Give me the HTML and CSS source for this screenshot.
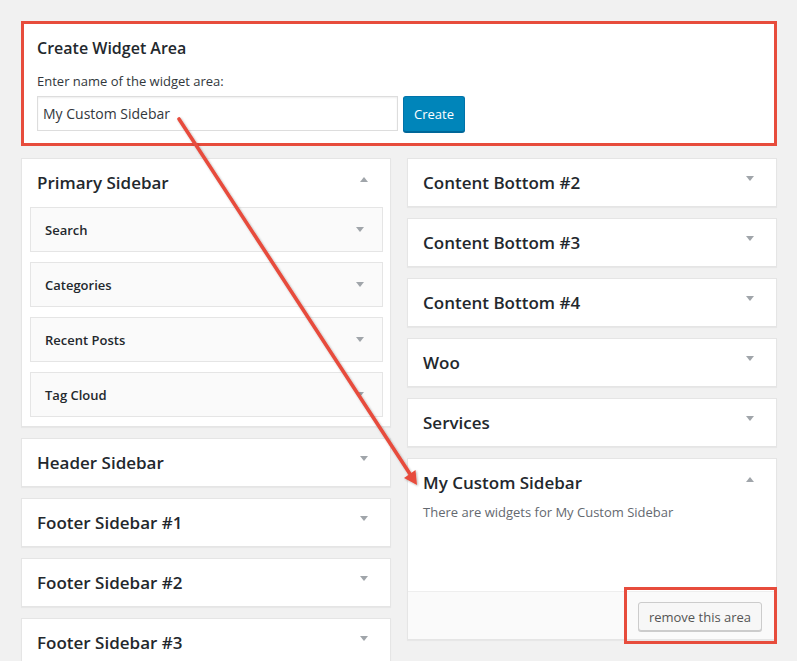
FILE: index.html
```html
<!DOCTYPE html>
<html lang="en">
<head>
<meta charset="utf-8">
<title>Widgets</title>
<link rel="stylesheet" href="styles.css">
</head>
<body>
<div class="page">
  <section class="create-box">
    <h2 class="create-title">Create Widget Area</h2>
    <label class="create-label" for="area-name">Enter name of the widget area:</label>
    <div class="create-row">
      <input id="area-name" class="create-input" type="text" value="My Custom Sidebar">
      <button class="btn-primary" type="button">Create</button>
    </div>
  </section>

  <div class="columns">
    <div class="col">
      <div class="card">
        <div class="card-head"><h3 class="card-title">Primary Sidebar</h3><span class="tri up"></span></div>
        <div class="widget-list">
          <div class="widget"><span class="widget-title">Search</span><span class="tri small"></span></div>
          <div class="widget"><span class="widget-title">Categories</span><span class="tri small"></span></div>
          <div class="widget"><span class="widget-title">Recent Posts</span><span class="tri small"></span></div>
          <div class="widget"><span class="widget-title">Tag Cloud</span><span class="tri small"></span></div>
        </div>
      </div>
      <div class="card"><div class="card-head"><h3 class="card-title">Header Sidebar</h3><span class="tri"></span></div></div>
      <div class="card"><div class="card-head"><h3 class="card-title">Footer Sidebar #1</h3><span class="tri"></span></div></div>
      <div class="card"><div class="card-head"><h3 class="card-title">Footer Sidebar #2</h3><span class="tri"></span></div></div>
      <div class="card"><div class="card-head"><h3 class="card-title">Footer Sidebar #3</h3><span class="tri"></span></div></div>
    </div>
    <div class="col">
      <div class="card"><div class="card-head"><h3 class="card-title">Content Bottom #2</h3><span class="tri"></span></div></div>
      <div class="card"><div class="card-head"><h3 class="card-title">Content Bottom #3</h3><span class="tri"></span></div></div>
      <div class="card"><div class="card-head"><h3 class="card-title">Content Bottom #4</h3><span class="tri"></span></div></div>
      <div class="card"><div class="card-head"><h3 class="card-title">Woo</h3><span class="tri"></span></div></div>
      <div class="card"><div class="card-head"><h3 class="card-title">Services</h3><span class="tri"></span></div></div>
      <div class="card custom">
        <div class="card-head"><h3 class="card-title">My Custom Sidebar</h3><span class="tri up"></span></div>
        <p class="card-desc">There are widgets for My Custom Sidebar</p>
        <div class="card-body"></div>
        <div class="card-foot"><button class="btn-secondary" type="button">remove this area</button></div>
        <div class="highlight"></div>
      </div>
    </div>
  </div>

  <svg class="arrow" width="797" height="661" viewBox="0 0 797 661" aria-hidden="true">
    <defs>
      <filter id="sh" x="-10%" y="-10%" width="120%" height="120%">
        <feDropShadow dx="1" dy="1" stdDeviation="1" flood-color="#000" flood-opacity="0.3"/>
      </filter>
    </defs>
    <g filter="url(#sh)">
      <line x1="179" y1="119" x2="410" y2="474" stroke="#e74c3c" stroke-width="3.6" stroke-linecap="round"/>
      <polygon points="417,485 404,478 415.5,470" fill="#e74c3c"/>
    </g>
  </svg>
</div>
</body>
</html>
```

FILE: styles.css
```css
html, body {
  margin: 0;
  padding: 0;
  background: #f1f1f1;
}

body {
  font-family: "Open Sans", "Noto Sans", "Liberation Sans", sans-serif;
  color: #23282d;
  width: 797px;
  height: 661px;
  overflow: hidden;
}

.page {
  position: relative;
  padding: 21px 0 0 21px;
  width: 797px;
  height: 661px;
  box-sizing: border-box;
}

/* Create box */
.create-box {
  box-sizing: border-box;
  width: 756px;
  height: 125px;
  border: 3px solid #e74c3c;
  background: #fff;
  padding: 14px 13px 0 13px;
}

.create-title {
  margin: 0;
  font-size: 16px;
  line-height: 20px;
  font-weight: 600;
  color: #23282d;
}

.create-label {
  display: block;
  margin-top: 14px;
  font-size: 13px;
  line-height: 18px;
  color: #32373c;
}

.create-row {
  display: flex;
  gap: 5px;
  margin-top: 6px;
  align-items: flex-start;
}

.create-input {
  box-sizing: border-box;
  width: 361px;
  height: 35px;
  margin: 0;
  padding: 0 5px;
  border: 1px solid #ddd;
  box-shadow: inset 0 1px 2px rgba(0,0,0,.07);
  font-family: inherit;
  font-size: 14px;
  color: #32373c;
  background: #fff;
  outline: none;
}

.btn-primary {
  box-sizing: border-box;
  width: 62px;
  height: 36px;
  margin: 0;
  padding: 0;
  background: #0085ba;
  border: 1px solid #0073aa;
  border-bottom-color: #006799;
  border-radius: 3px;
  box-shadow: 0 1px 0 #006799;
  color: #fff;
  font-family: inherit;
  font-size: 13px;
}

/* Columns */
.columns {
  display: grid;
  grid-template-columns: 370px 370px;
  column-gap: 16px;
  margin-top: 12px;
  align-items: start;
}

.card {
  position: relative;
  background: #fff;
  border: 1px solid #e5e5e5;
  box-shadow: 0 1px 1px rgba(0,0,0,.04);
  margin-bottom: 11px;
}

.card-head {
  display: flex;
  align-items: center;
  justify-content: space-between;
  height: 47px;
  padding: 0 22px 0 15px;
}

.card-title {
  margin: 0;
  font-size: 17px;
  line-height: 22px;
  font-weight: 600;
  color: #23282d;
}

.tri {
  width: 0;
  height: 0;
  border-left: 4px solid transparent;
  border-right: 4px solid transparent;
  border-top: 5px solid #a0a5aa;
  align-self: flex-start;
  margin-top: 17px;
}

.tri.up {
  border-top: 0;
  border-bottom: 5px solid #a0a5aa;
  margin-top: 18px;
}

.tri.small {
  align-self: center;
  margin-top: 0;
}

.widget-list {
  display: flex;
  flex-direction: column;
  gap: 10px;
  padding: 1px 7px 9px 8px;
}

.widget {
  box-sizing: border-box;
  height: 45px;
  display: flex;
  align-items: center;
  justify-content: space-between;
  background: #fafafa;
  border: 1px solid #e5e5e5;
  padding: 0 18px 0 14px;
}

.widget-title {
  font-size: 13px;
  font-weight: 600;
  color: #23282d;
}

.card-desc {
  margin: -3px 0 0 0;
  padding: 0 15px;
  font-size: 13px;
  line-height: 18px;
  color: #646970;
}

.card-body {
  height: 70px;
}

.card-foot {
  display: flex;
  justify-content: flex-end;
  align-items: flex-start;
  height: 37px;
  border-top: 1px solid #eee;
  background: #fafafa;
  padding: 10px 14px 0 0;
}

.btn-secondary {
  box-sizing: border-box;
  width: 124px;
  height: 29px;
  margin: 0;
  padding: 0;
  background: #f7f7f7;
  border: 1px solid #ccc;
  border-radius: 3px;
  box-shadow: 0 1px 0 #ccc;
  color: #555;
  font-family: inherit;
  font-size: 13px;
}

.highlight {
  position: absolute;
  right: -1px;
  bottom: -5px;
  width: 153px;
  height: 57px;
  box-sizing: border-box;
  border: 3px solid #e74c3c;
  pointer-events: none;
}

.arrow {
  position: absolute;
  left: 0;
  top: 0;
  pointer-events: none;
}
```
